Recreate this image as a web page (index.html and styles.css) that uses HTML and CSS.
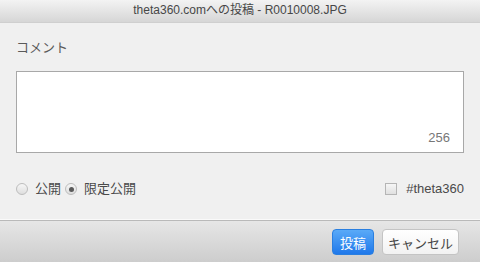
FILE: index.html
```html
<!DOCTYPE html>
<html lang="ja">
<head>
<meta charset="utf-8">
<title>theta360.comへの投稿</title>
<link rel="stylesheet" href="styles.css">
</head>
<body>
<div class="dialog">
  <div class="titlebar">theta360.comへの投稿 - R0010008.JPG</div>
  <div class="content">
    <div class="label">コメント</div>
    <div class="textbox">
      <span class="counter">256</span>
    </div>
    <div class="options">
      <div class="radios">
        <span class="radio"></span><span class="opt">公開</span>
        <span class="radio checked"></span><span class="opt">限定公開</span>
      </div>
      <div class="tag">
        <span class="checkbox"></span><span class="opt">#theta360</span>
      </div>
    </div>
  </div>
  <div class="footer">
    <button class="btn primary">投稿</button>
    <button class="btn">キャンセル</button>
  </div>
</div>
</body>
</html>
```

FILE: styles.css
```css
html, body {
  margin: 0;
  padding: 0;
}
body {
  background: #f0f0f0;
  font-family: "Liberation Sans", "Noto Sans CJK JP", sans-serif;
  color: #444;
}
.dialog {
  width: 480px;
  height: 262px;
  display: flex;
  flex-direction: column;
  overflow: hidden;
}
.titlebar {
  height: 22px;
  line-height: 21px;
  text-align: center;
  font-size: 12px;
  color: #474747;
  background: linear-gradient(#f3f3f3, #d6d6d6);
  border-bottom: 1px solid #cfcfcf;
}
.content {
  flex: 1;
  padding: 0 16px;
  display: flex;
  flex-direction: column;
}
.label {
  margin-top: 17px;
  font-size: 13px;
  line-height: 16px;
  color: #5a5a5a;
}
.textbox {
  margin-top: 15px;
  height: 80px;
  background: #fff;
  border: 1px solid #a8a8a8;
  display: flex;
  align-items: flex-end;
  justify-content: flex-end;
}
.counter {
  font-size: 13px;
  color: #777;
  padding: 0 13px 6px 0;
  line-height: 16px;
}
.options {
  margin-top: 28px;
  display: flex;
  justify-content: space-between;
  align-items: center;
  height: 16px;
}
.radios, .tag {
  display: flex;
  align-items: center;
}
.opt {
  font-size: 13px;
  color: #4a4a4a;
  line-height: 16px;
}
.radio {
  width: 10px;
  height: 10px;
  border-radius: 50%;
  border: 1px solid #bdbdbd;
  background: linear-gradient(#f6f6f6, #dedede);
  margin-right: 7px;
  position: relative;
}
.radio + .opt {
  margin-right: 4px;
}
.radio.checked::after {
  content: "";
  position: absolute;
  left: 2.5px;
  top: 2.5px;
  width: 5px;
  height: 5px;
  border-radius: 50%;
  background: #5a5a5a;
}
.checkbox {
  width: 10px;
  height: 10px;
  border: 1px solid #b5b5b5;
  background: linear-gradient(#f6f6f6, #e0e0e0);
  margin-right: 9px;
}
.tag .opt {
  margin-right: 0;
}
.footer {
  height: 41px;
  border-top: 1px solid #b9b9b9;
  box-shadow: 0 -1px 0 #fafafa;
  background: linear-gradient(#e6e6e6, #cdcdcd);
  display: flex;
  justify-content: flex-end;
  align-items: center;
  gap: 8px;
  padding-right: 21px;
}
.btn {
  height: 26px;
  border-radius: 4px;
  border: 1px solid #c4c4c4;
  background: linear-gradient(#ffffff, #f2f2f2);
  font-family: "Liberation Sans", "Noto Sans CJK JP", sans-serif;
  font-size: 13px;
  color: #444;
  margin-top: 1px;
  width: 77px;
  padding: 0;
}
.btn.primary {
  width: 42px;
  border: 1px solid #2a7fe0;
  background: linear-gradient(#5aaaf8, #1f78ea);
  color: #fff;
}
```
